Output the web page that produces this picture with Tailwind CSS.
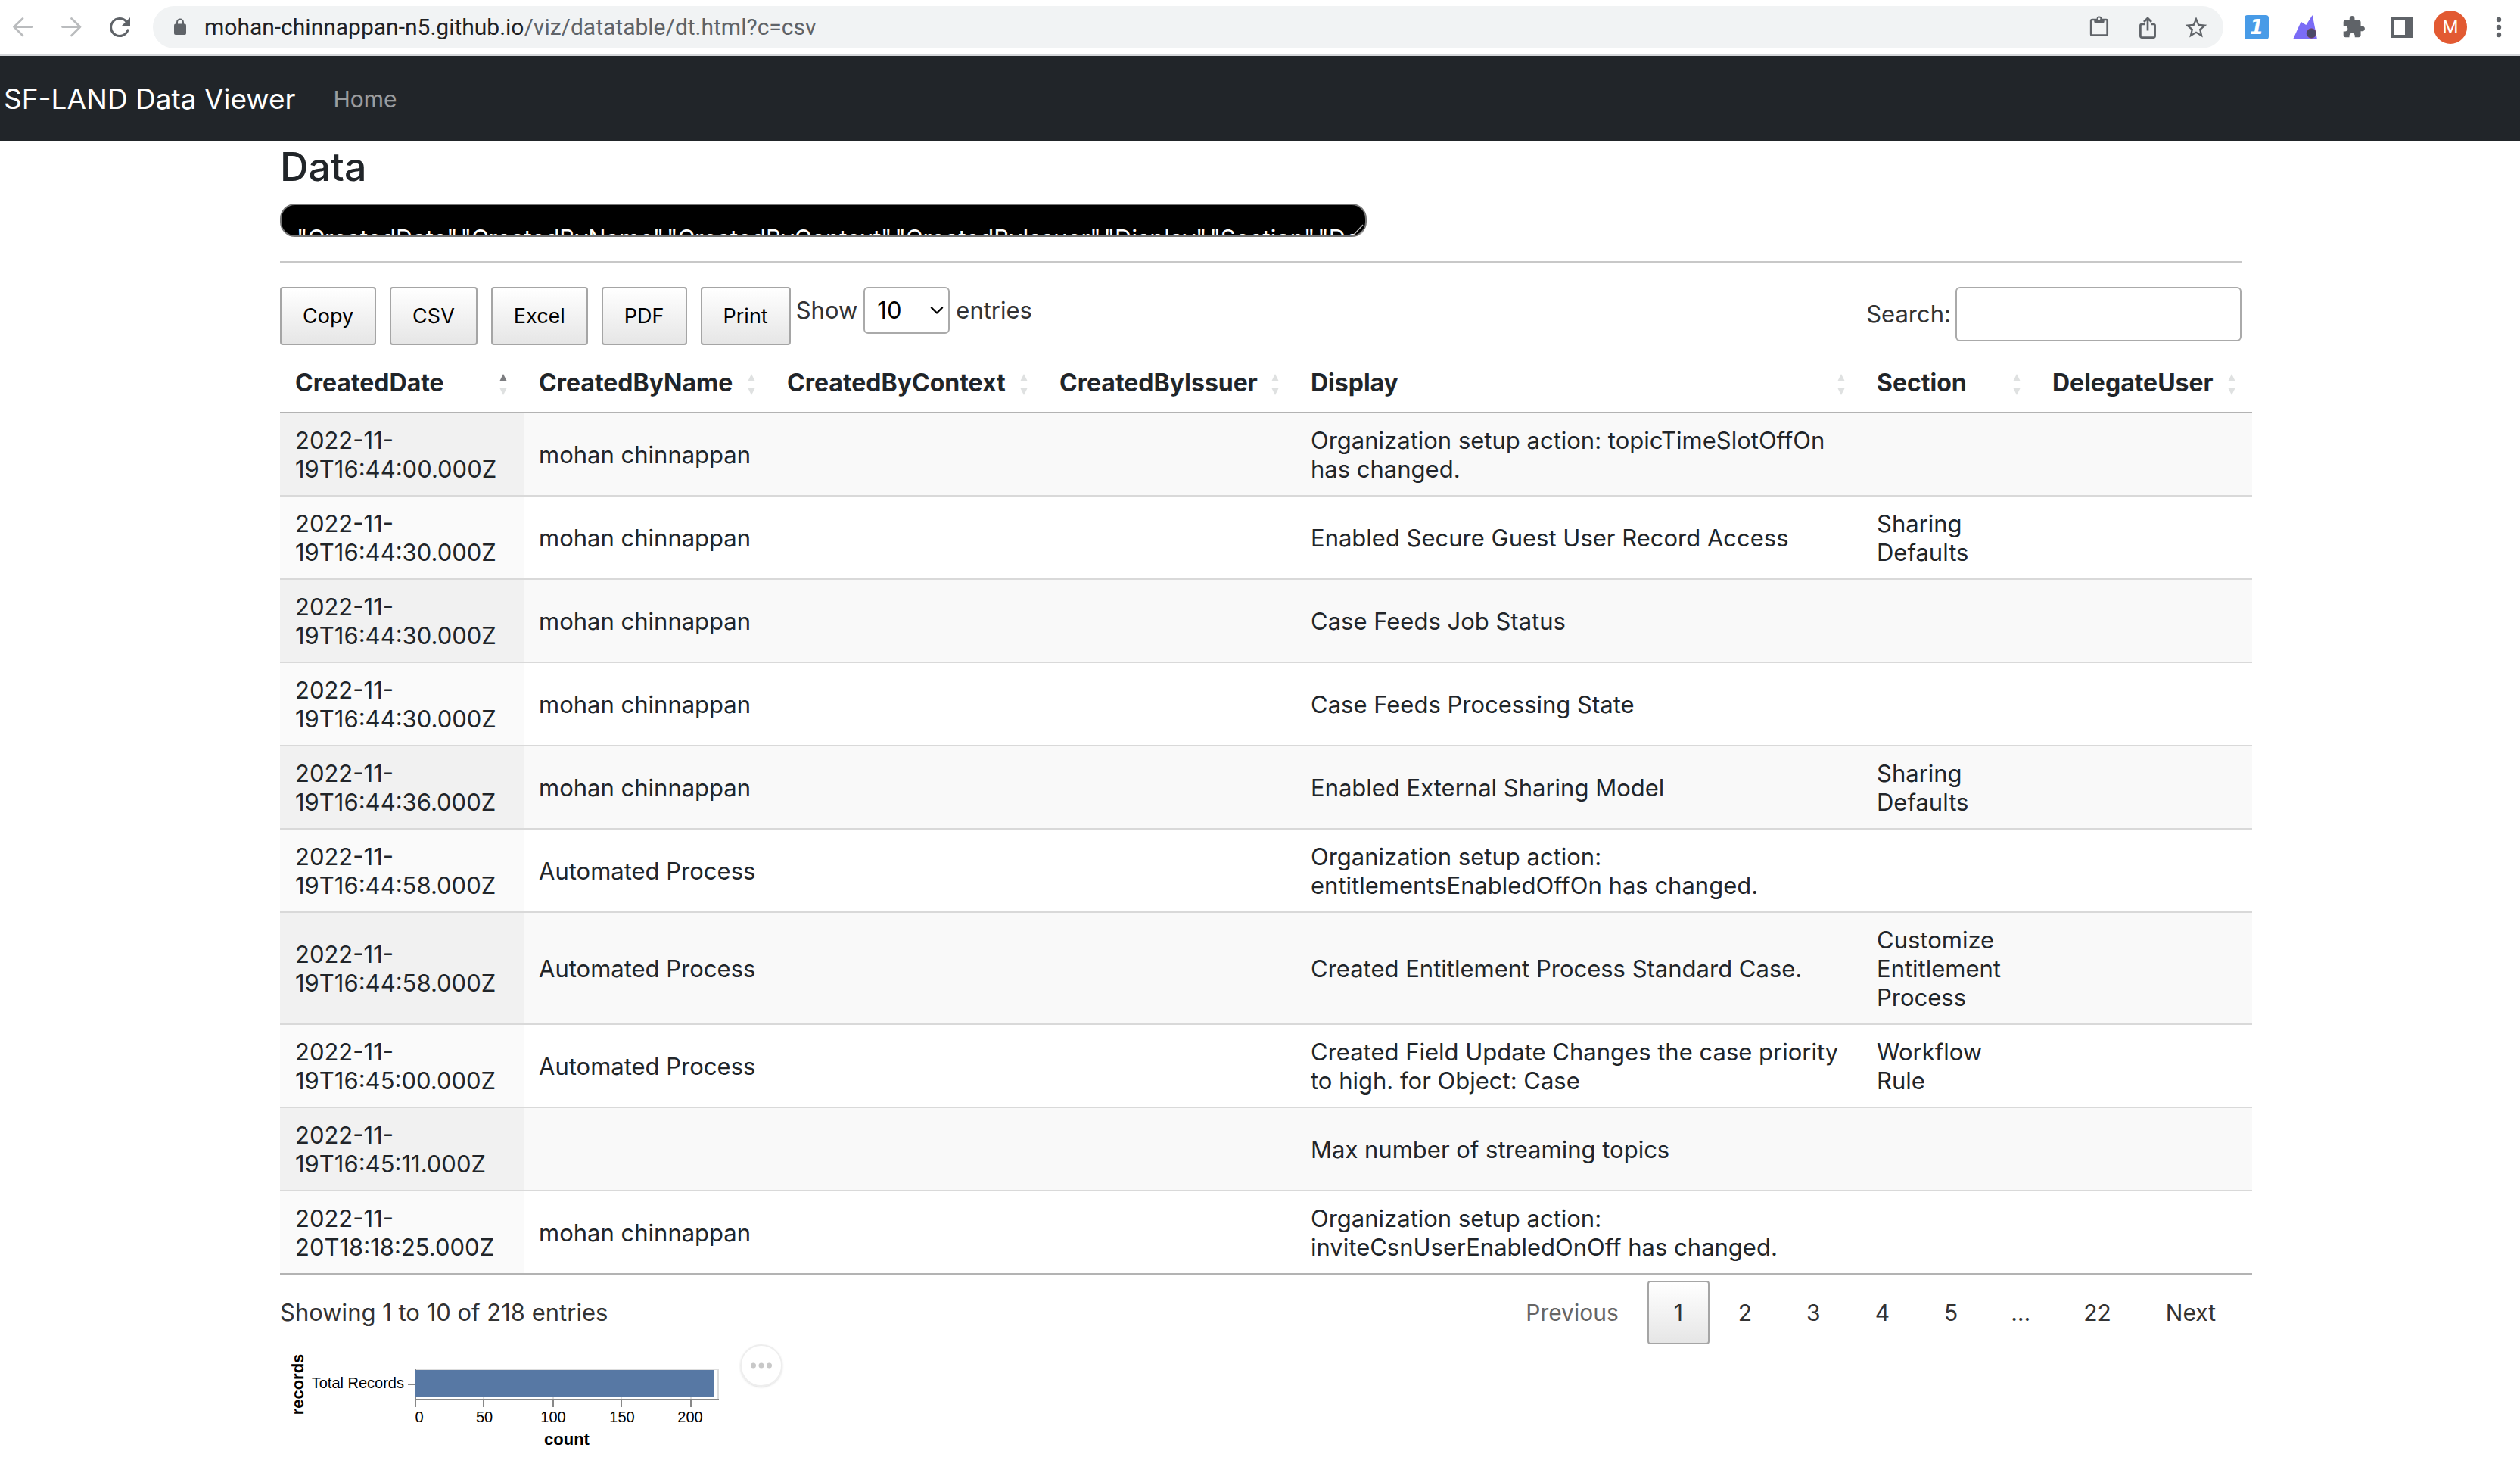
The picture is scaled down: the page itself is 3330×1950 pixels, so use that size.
<!DOCTYPE html>
<html lang="en">
<head>
<meta charset="utf-8">
<title>SF-LAND Data Viewer</title>
<script src="https://cdn.jsdelivr.net/npm/@tailwindcss/browser@4"></script>
</head>
<body class="bg-white font-['Inter',sans-serif] text-[31px] leading-[38px] text-[#212529]">

<!-- Browser toolbar -->
<header class="flex h-[74px] items-center border-b-2 border-[#d5d7da] bg-white pl-[14px] pr-3">
  <div class="flex items-center gap-8">
    <button aria-label="Back"><svg class="size-8" viewBox="0 0 32 32" fill="none" stroke="#babcbe" stroke-width="2.8" stroke-linecap="round" stroke-linejoin="round"><path d="M28 15.5H4.5M16 4.5 4.5 15.5 16 27"/></svg></button>
    <button aria-label="Forward"><svg class="size-8" viewBox="0 0 32 32" fill="none" stroke="#babcbe" stroke-width="2.8" stroke-linecap="round" stroke-linejoin="round"><path d="M4.500 15.500H28M16.500 4.500 28 15.500 16.500 27"/></svg></button>
    <button aria-label="Reload"><svg class="size-8" viewBox="0 0 32 32"><path d="M24.600 8.200A11.500 11.500 0 1 0 27 19.800" fill="none" stroke="#5f6368" stroke-width="3" stroke-linecap="round"/><path d="M30 3v11H19z" fill="#5f6368"/></svg></button>
  </div>
  <div class="ml-7 flex h-14 flex-1 items-center rounded-full bg-[#f1f3f4] pl-7 pr-5">
    <svg class="h-6 w-4" viewBox="0 0 16 24"><rect y="7.500" width="16" height="14.500" rx="2" fill="#5f6368"/><path d="M4 8V5.500a4 4 0 0 1 8 0V8" fill="none" stroke="#5f6368" stroke-width="2"/></svg>
    <div class="ml-6 flex-1 font-['Roboto',sans-serif] text-[30px] text-[#5f6368]"><span class="text-[#202124]">mohan-chinnappan-n5.github.io</span>/viz/datatable/dt.html?c=csv</div>
    <div class="flex items-center gap-8">
      <button aria-label="Clipboard"><svg class="size-8" viewBox="0 0 32 32"><rect x="5.200" y="6" width="21.500" height="20.700" rx="1.500" fill="none" stroke="#5f6368" stroke-width="2.700"/><path d="M9.300 5h13.400v3.500a2 2 0 0 1-2 2h-9.400a2 2 0 0 1-2-2z" fill="#5f6368"/><circle cx="16" cy="4.800" r="3.400" fill="#5f6368"/><circle cx="16" cy="4.800" r="1.400" fill="#f1f3f4"/></svg></button>
      <button aria-label="Share"><svg class="size-8" viewBox="0 0 32 32" fill="none" stroke="#5f6368" stroke-width="2.700"><path d="M12 12H8.200a1.800 1.800 0 0 0-1.800 1.800v14a1.800 1.800 0 0 0 1.800 1.800h15.600a1.800 1.800 0 0 0 1.800-1.800v-14a1.800 1.800 0 0 0-1.800-1.800H20M16 20.500V4M11 9l5-5 5 5"/></svg></button>
      <button aria-label="Bookmark"><svg class="size-8" viewBox="0.8 0.4 22.4 22.4" fill="#5f6368"><path d="M22 9.240l-7.190-.620L12 2 9.190 8.630 2 9.240l5.460 4.730L5.820 21 12 17.270 18.180 21l-1.630-7.030L22 9.240zM12 15.400l-3.760 2.270 1-4.280-3.320-2.880 4.380-.380L12 6.100l1.710 4.040 4.380.380-3.320 2.880 1 4.280L12 15.400z"/></svg></button>
    </div>
  </div>
  <div class="ml-7 flex items-center gap-8">
    <button class="flex size-8 items-center justify-center rounded-sm bg-[#489be7] font-['DejaVu_Sans',sans-serif] text-[26px] font-bold italic leading-8 text-white">1</button>
    <button aria-label="Extension"><svg class="size-8" viewBox="0 0 32 32"><path d="M0 32 10.600 8.700 17.300 13 25.700 0 32 32z" fill="#7b6cf6"/><circle cx="24.300" cy="24" r="6.200" fill="#4b4a68" stroke="#84405f" stroke-width=".8"/></svg></button>
    <button aria-label="Extensions"><svg class="size-8" viewBox="0 0.2 23.8 23.8" fill="#5f6368"><path d="M20.500 11H19V7c0-1.100-.900-2-2-2h-4V3.500C13 2.120 11.880 1 10.500 1S8 2.120 8 3.500V5H4c-1.100 0-1.990.900-1.990 2v3.800H3.500c1.490 0 2.700 1.210 2.700 2.700s-1.210 2.700-2.700 2.700H2V20c0 1.100.900 2 2 2h3.800v-1.500c0-1.490 1.210-2.700 2.700-2.700 1.490 0 2.700 1.210 2.700 2.700V22H17c1.100 0 2-.900 2-2v-4h1.500c1.380 0 2.500-1.120 2.500-2.500S21.880 11 20.500 11z"/></svg></button>
    <button aria-label="Side panel"><svg class="size-8" viewBox="0 0 32 32"><path fill-rule="evenodd" d="M2 2h28v28H2zM6 6v20h14V6z" fill="#5f6368"/></svg></button>
  </div>
  <button class="ml-[26px] flex size-11 items-center justify-center rounded-full bg-[#e25a32] font-['Roboto',sans-serif] text-2xl text-white">M</button>
  <button class="ml-[26px]" aria-label="Menu"><svg class="size-8" viewBox="0 0 32 32" fill="#5f6368"><circle cx="16" cy="6" r="3.200"/><circle cx="16" cy="16" r="3.200"/><circle cx="16" cy="26" r="3.200"/></svg></button>
</header>

<!-- Site navigation -->
<nav class="flex h-28 items-center gap-[50px] bg-[#212529] pl-[5px] pt-0.5">
  <a href="#" class="text-[37px] leading-[56px] text-white">SF-LAND Data Viewer</a>
  <a href="#" class="text-[30px] text-white/55">Home</a>
</nav>

<main class="mx-auto max-w-[2640px] pl-[25px] pr-[23px]">
  <h3 class="text-[52px] font-medium leading-[70px]">Data</h3>
  <div class="relative mt-[13px] w-[1436px] max-w-full">
    <textarea aria-label="CSV data" spellcheck="false" class="block h-11 w-full resize-none overflow-hidden rounded-[20px] border-2 border-[#767676] bg-black pb-0 pl-5 pr-1 pt-5 leading-[48px] break-all text-white">"CreatedDate","CreatedByName","CreatedByContext","CreatedByIssuer","Display","Section","DelegateUser"</textarea>
    <svg class="absolute bottom-0.5 right-1 h-4 w-4" viewBox="0 0 16 16" stroke="#bbb" stroke-width="1.400"><path d="M3 15 15 2M11 15l4-4"/></svg>
  </div>
  <hr class="mt-8 border-t-2 border-[#c8c8c8]">

  <!-- Table controls -->
  <div class="mt-8 flex items-start justify-between pb-[10px] text-[#333]">
    <div class="flex items-start">
      <div class="flex gap-[18px] text-[27px] leading-[73px] text-black">
        <button class="rounded-[4px] border-2 border-[#a5a5a5] bg-linear-to-b from-white to-[#e6e6e6] px-7">Copy</button>
        <button class="rounded-[4px] border-2 border-[#a5a5a5] bg-linear-to-b from-white to-[#e6e6e6] px-7">CSV</button>
        <button class="rounded-[4px] border-2 border-[#a5a5a5] bg-linear-to-b from-white to-[#e6e6e6] px-7">Excel</button>
        <button class="rounded-[4px] border-2 border-[#a5a5a5] bg-linear-to-b from-white to-[#e6e6e6] px-7">PDF</button>
        <button class="rounded-[4px] border-2 border-[#a5a5a5] bg-linear-to-b from-white to-[#e6e6e6] px-7">Print</button>
      </div>
      <label class="ml-[7px] flex items-center gap-2">Show
        <span class="relative block">
          <select class="block h-[62px] w-[114px] appearance-none rounded-md border-2 border-[#aaa] bg-transparent pl-4 text-black"><option>10</option><option>25</option><option>50</option><option>100</option></select>
          <svg class="pointer-events-none absolute right-2 top-[26px] h-[10px] w-[18px]" viewBox="0 0 18 10" fill="none" stroke="#000" stroke-width="2.400" stroke-linecap="round" stroke-linejoin="round"><path d="M2 1.500 9 8.500l7-7"/></svg>
        </span>
        entries</label>
    </div>
    <label class="flex items-center gap-[6px]">Search:<input type="search" class="h-[72px] w-[378px] rounded-md border-2 border-[#aaa] bg-transparent px-2"></label>
  </div>

  <!-- Records -->
  <table class="w-[calc(100%+14px)] table-fixed border-separate border-spacing-0 border-b-2 border-[#b3b3b3] text-left [&_td]:border-[#d9d9d9] [&_td]:px-5 [&_td]:pt-[17px] [&_td]:pb-[15px] [&_th]:border-b-2 [&_th]:border-[#b3b3b3] [&_th]:pt-[21px] [&_th]:pb-[19px] [&_th]:pl-5 [&_th]:pr-[22px] [&_th]:text-[32px] [&_tbody_tr:nth-child(odd)]:bg-[#f9f9f9] [&_tbody_tr:nth-child(odd)_td:first-child]:bg-[#f1f1f1] [&_tbody_tr:nth-child(even)_td:first-child]:bg-[#fafafa] [&_tr+tr_td]:border-t-2">
    <colgroup><col class="w-[322px]"><col class="w-[328px]"><col class="w-[360px]"><col class="w-[332px]"><col><col class="w-[232px]"><col class="w-[284px]"></colgroup>
    <thead>
      <tr>
        <th><div class="flex justify-between">CreatedDate<svg class="h-[38px] w-[10px]" viewBox="0 0 10 38" fill="#dfe1e1"><path d="M5 7l4.500 9h-9z" fill="#7c7d80"/><path d="M5 35l4.500-9h-9z"/></svg></div></th>
        <th><div class="flex justify-between">CreatedByName<svg class="h-[38px] w-[10px]" viewBox="0 0 10 38" fill="#dfe1e1"><path d="M5 7l4.500 9h-9zM5 35l4.500-9h-9z"/></svg></div></th>
        <th><div class="flex justify-between">CreatedByContext<svg class="h-[38px] w-[10px]" viewBox="0 0 10 38" fill="#dfe1e1"><path d="M5 7l4.500 9h-9zM5 35l4.500-9h-9z"/></svg></div></th>
        <th><div class="flex justify-between">CreatedByIssuer<svg class="h-[38px] w-[10px]" viewBox="0 0 10 38" fill="#dfe1e1"><path d="M5 7l4.500 9h-9zM5 35l4.500-9h-9z"/></svg></div></th>
        <th><div class="flex justify-between">Display<svg class="h-[38px] w-[10px]" viewBox="0 0 10 38" fill="#dfe1e1"><path d="M5 7l4.500 9h-9zM5 35l4.500-9h-9z"/></svg></div></th>
        <th><div class="flex justify-between">Section<svg class="h-[38px] w-[10px]" viewBox="0 0 10 38" fill="#dfe1e1"><path d="M5 7l4.500 9h-9zM5 35l4.500-9h-9z"/></svg></div></th>
        <th><div class="flex justify-between">DelegateUser<svg class="h-[38px] w-[10px]" viewBox="0 0 10 38" fill="#dfe1e1"><path d="M5 7l4.500 9h-9zM5 35l4.500-9h-9z"/></svg></div></th>
      </tr>
    </thead>
    <tbody>
      <tr><td>2022-11-19T16:44:00.000Z</td><td>mohan chinnappan</td><td></td><td></td><td>Organization setup action: topicTimeSlotOffOn has changed.</td><td></td><td></td></tr>
      <tr><td>2022-11-19T16:44:30.000Z</td><td>mohan chinnappan</td><td></td><td></td><td>Enabled Secure Guest User Record Access</td><td>Sharing Defaults</td><td></td></tr>
      <tr><td>2022-11-19T16:44:30.000Z</td><td>mohan chinnappan</td><td></td><td></td><td>Case Feeds Job Status</td><td></td><td></td></tr>
      <tr><td>2022-11-19T16:44:30.000Z</td><td>mohan chinnappan</td><td></td><td></td><td>Case Feeds Processing State</td><td></td><td></td></tr>
      <tr><td>2022-11-19T16:44:36.000Z</td><td>mohan chinnappan</td><td></td><td></td><td>Enabled External Sharing Model</td><td>Sharing Defaults</td><td></td></tr>
      <tr><td>2022-11-19T16:44:58.000Z</td><td>Automated Process</td><td></td><td></td><td>Organization setup action: entitlementsEnabledOffOn has changed.</td><td></td><td></td></tr>
      <tr><td>2022-11-19T16:44:58.000Z</td><td>Automated Process</td><td></td><td></td><td>Created Entitlement Process Standard Case.</td><td>Customize Entitlement Process</td><td></td></tr>
      <tr><td>2022-11-19T16:45:00.000Z</td><td>Automated Process</td><td></td><td></td><td>Created Field Update Changes the case priority to high. for Object: Case</td><td>Workflow Rule</td><td></td></tr>
      <tr><td>2022-11-19T16:45:11.000Z</td><td></td><td></td><td></td><td>Max number of streaming topics</td><td></td><td></td></tr>
      <tr><td>2022-11-20T18:18:25.000Z</td><td>mohan chinnappan</td><td></td><td></td><td>Organization setup action: inviteCsnUserEnabledOnOff has changed.</td><td></td><td></td></tr>
    </tbody>
  </table>

  <!-- Table footer -->
  <div class="mt-2 flex items-center justify-between text-[#333]">
    <div>Showing 1 to 10 of 218 entries</div>
    <div class="flex gap-1 text-[30px] leading-[80px]">
      <a href="#" class="border-2 border-transparent px-8 text-[#666]">Previous</a>
      <a href="#" class="min-w-[82px] rounded-[4px] border-2 border-[#a5a5a5] bg-linear-to-b from-white to-[#e6e6e6] text-center">1</a>
      <a href="#" class="border-2 border-transparent px-8">2</a>
      <a href="#" class="border-2 border-transparent px-8">3</a>
      <a href="#" class="border-2 border-transparent px-8">4</a>
      <a href="#" class="border-2 border-transparent px-8">5</a>
      <span class="border-y-2 border-transparent px-8">…</span>
      <a href="#" class="border-2 border-transparent px-8">22</a>
      <a href="#" class="border-2 border-transparent px-8">Next</a>
    </div>
  </div>

  <!-- Record count chart -->
  <div class="flex items-start">
    <svg class="h-[150px] w-[608px] font-['Liberation_Sans',sans-serif]" viewBox="0 0 608 150" fill="#000">
      <rect x="179" y="33" width="400" height="40" fill="none" stroke="#ddd" stroke-width="2"/>
      <path d="M269 34v38M361 34v38M451 34v38M543 34v38" stroke="#ddd" stroke-width="2"/>
      <path d="M178 73h402M179 73v10M269 73v10M361 73v10M451 73v10M543 73v10M169 53h10M179 33v40" stroke="#888" stroke-width="2"/>
      <rect x="178" y="34" width="396" height="36" fill="#5778a4"/>
      <text x="164" y="58" font-size="20" text-anchor="end">Total Records</text>
      <g font-size="20" text-anchor="middle"><text x="184" y="103">0</text><text x="270" y="103">50</text><text x="361" y="103">100</text><text x="452" y="103">150</text><text x="542" y="103">200</text></g>
      <text x="379" y="133" font-size="22" font-weight="700" text-anchor="middle">count</text>
      <text x="31" y="53" font-size="22" font-weight="700" text-anchor="middle" transform="rotate(-90 31 53)">records</text>
    </svg>
    <button class="flex size-14 items-center justify-center rounded-full border-2 border-[#eee] shadow-sm" aria-label="Chart actions"><svg class="h-2 w-7" viewBox="0 0 28 8" fill="#c8c8c8"><circle cx="3.500" cy="4" r="3.500"/><circle cx="14" cy="4" r="3.500"/><circle cx="24.500" cy="4" r="3.500"/></svg></button>
  </div>
</main>
</body>
</html>
